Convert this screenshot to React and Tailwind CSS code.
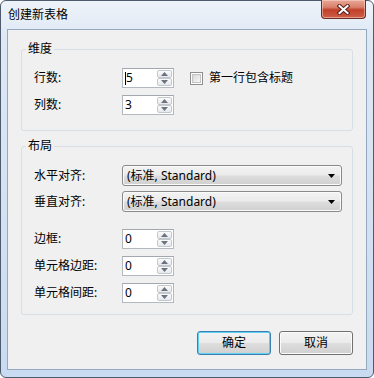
import React from "react";

const btnFace =
  "bg-[linear-gradient(to_bottom,#f3f3f3_0%,#ebebeb_48%,#dddddd_52%,#d0d0d0_100%)]";

const SpinBox = ({ value, caret }) => (
  <div className="flex w-[52px] h-[20px] bg-white border border-[#b4b8bf] border-t-[#a3a7ae]">
    <div className="flex-1 flex items-center pl-[2px] leading-none">
      {caret && <span className="w-px h-[13px] bg-black" />}
      <span>{value}</span>
    </div>
    <div className="flex flex-col w-[15px] my-px mr-px gap-0">
      {["up", "down"].map((dir) => (
        <div
          key={dir}
          className="flex-1 flex items-center justify-center border border-[#c3c8cf] rounded-[2px] bg-[linear-gradient(to_bottom,#fbfbfb,#e6e8ec)]"
        >
          <svg width="7" height="4" viewBox="0 0 7 4">
            {dir === "up" ? (
              <polygon points="3.5,0 7,4 0,4" fill="#6b7280" />
            ) : (
              <polygon points="0,0 7,0 3.5,4" fill="#6b7280" />
            )}
          </svg>
        </div>
      ))}
    </div>
  </div>
);

const Dropdown = ({ text }) => (
  <div
    className={`flex items-center justify-between w-[220px] h-[21px] pl-[4px] pr-[6px] border border-[#8a8a8a] rounded-[3px] shadow-[inset_0_0_0_1px_#fbfbfb] ${btnFace}`}
  >
    <span>{text}</span>
    <svg width="7" height="4" viewBox="0 0 7 4">
      <polygon points="0,0 7,0 3.5,4" fill="#000" />
    </svg>
  </div>
);

const Row = ({ label, children }) => (
  <div className="flex items-center h-[20px]">
    <span className="w-[88px]">{label}</span>
    {children}
  </div>
);

const Group = ({ title, className, children }) => (
  <fieldset
    className={`w-[332px] border border-[#d5dfe5] rounded-[3px] pl-[12px] ${className}`}
  >
    <legend className="-ml-[8px] px-[2px] h-[16px] leading-[16px]">{title}</legend>
    {children}
  </fieldset>
);

export default function App() {
  return (
    <div className="w-[374px] h-[378px] text-[12px] text-black font-['Noto_Sans','Noto_Sans_CJK_SC',sans-serif]">
      <div className="relative flex flex-col w-full h-full rounded-[6px] border border-[#4d5b6c] bg-[linear-gradient(to_bottom,#eef3f9_0%,#dde8f5_10%,#c9dbf1_100%)]">
        {/* title bar */}
        <div className="h-[28px] flex items-center pl-[7px] pb-[1px]">创建新表格</div>

        {/* close button */}
        <div className="absolute top-[-1px] right-[7px] w-[45px] h-[19px] flex items-center justify-center rounded-b-[4px] border border-t-0 border-[#6d2b24] bg-[linear-gradient(to_bottom,#e8a797_0%,#d8806c_40%,#c23f2a_55%,#cc5f48_100%)] shadow-[inset_0_0_0_1px_rgba(255,220,210,0.5)]">
          <svg width="13" height="11" viewBox="0 0 13 11">
            <g strokeLinecap="square">
              <path d="M2.5 2 L10.5 9 M10.5 2 L2.5 9" stroke="#5a2019" strokeWidth="4" />
              <path d="M2.5 2 L10.5 9 M10.5 2 L2.5 9" stroke="#fff" strokeWidth="2" />
            </g>
          </svg>
        </div>

        {/* client area */}
        <div className="mx-[6px] h-[341px] border border-[#95a8c0] bg-[#f0f0f0] flex flex-col pl-[13px] pt-[11px]">
          <Group title="维度" className="pt-[11px] pb-[15px]">
            <div className="flex flex-col gap-[7px]">
              <Row label="行数:">
                <SpinBox value="5" caret />
                <div className="flex items-center ml-[16px]">
                  <span className="w-[13px] h-[13px] border border-[#8e8f8f] p-px bg-white">
                    <span className="block w-full h-full bg-[linear-gradient(135deg,#d9d9d9,#f6f6f6)] border border-[#c4c4c4]" />
                  </span>
                  <span className="ml-[6px]">第一行包含标题</span>
                </div>
              </Row>
              <Row label="列数:">
                <SpinBox value="3" />
              </Row>
            </div>
          </Group>

          <Group title="布局" className="mt-[7px] pt-[11px] pb-[11px]">
            <div className="flex flex-col gap-[5px]">
              <div className="flex items-center h-[21px]">
                <span className="w-[88px]">水平对齐:</span>
                <Dropdown text="(标准, Standard)" />
              </div>
              <div className="flex items-center h-[21px]">
                <span className="w-[88px]">垂直对齐:</span>
                <Dropdown text="(标准, Standard)" />
              </div>
            </div>
            <div className="flex flex-col gap-[7px] mt-[17px]">
              <Row label="边框:">
                <SpinBox value="0" />
              </Row>
              <Row label="单元格边距:">
                <SpinBox value="0" />
              </Row>
              <Row label="单元格间距:">
                <SpinBox value="0" />
              </Row>
            </div>
          </Group>

          <div className="flex justify-end gap-[8px] mt-[16px] pr-[13px]">
            <button
              className={`w-[74px] h-[24px] rounded-[3px] border border-[#3c7fb1] shadow-[inset_0_0_0_1px_#5fd0ef] ${btnFace}`}
            >
              确定
            </button>
            <button
              className={`w-[74px] h-[24px] rounded-[3px] border border-[#707070] shadow-[inset_0_0_0_1px_#fbfbfb] ${btnFace}`}
            >
              取消
            </button>
          </div>
        </div>
      </div>
    </div>
  );
}
